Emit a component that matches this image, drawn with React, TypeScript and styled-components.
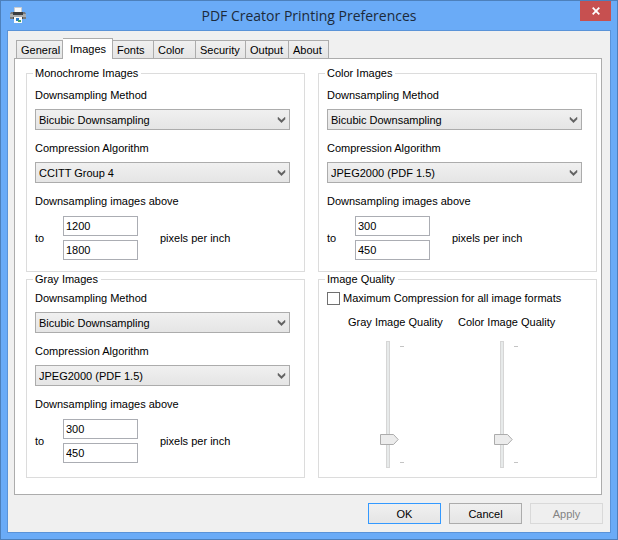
import React, { useId } from "react";
import styled, { createGlobalStyle, css } from "styled-components";

const Global = createGlobalStyle`
  * { box-sizing: border-box; }
  body { margin: 0; background: #6aabf7; }
  body, button, input, select {
    font-family: "Liberation Sans", Arial, sans-serif;
    font-size: 11px;
    line-height: 14px;
    color: #000;
  }
`;

const Window = styled.main`
  display: flex;
  flex-direction: column;
  min-height: 100vh;
  border: 1px solid #4d80bb;
  background: #6aabf7;
`;

const TitleBar = styled.header`
  display: grid;
  grid-template-columns: 1fr auto 1fr;
  height: 29px;
  padding: 0 6px;
`;

const AppIcon = styled.svg`
  width: 16px;
  height: 16px;
  margin: 6px 0 0 3px;
`;

const Title = styled.h1`
  margin: 0;
  font: 400 14px/29px "Open Sans", sans-serif;
  color: #1c2a3a;
  white-space: nowrap;
`;

const CloseButton = styled.button`
  justify-self: end;
  display: grid;
  place-items: center;
  width: 31px;
  height: 20px;
  padding: 0;
  border: 0;
  background: #c75050;
`;

const Body = styled.div`
  flex: 1;
  display: flex;
  flex-direction: column;
  margin: 0 6px 6px;
  padding: 7px 7px 8px 6px;
  border: 1px solid #5a93d8;
  background: #f0f0f0;
`;

const Tabs = styled.div`
  display: flex;
  align-items: flex-end;
  height: 20px;
  padding-left: 2px;
`;

const Tab = styled.button<{ $width: number }>`
  width: ${(p) => p.$width}px;
  height: 18px;
  padding: 0 0 0 4px;
  border: 1px solid #acacac;
  border-width: 1px 1px 0 1px;
  background: linear-gradient(#f0f0f0, #e5e5e5);
  text-align: left;
  white-space: nowrap;

  & + & { border-left-width: 0; }

  &[aria-selected="true"] {
    z-index: 1;
    height: 21px;
    margin-bottom: -1px;
    padding: 0 0 1px 7px;
    background: #fff;
  }
`;

const Panel = styled.section`
  flex: 1;
  display: grid;
  grid-template-columns: 1fr 1fr;
  grid-template-rows: 1fr 1fr;
  gap: 1px 13px;
  margin-right: 1px;
  padding: 8px 4px 16px 11px;
  border: 1px solid #acacac;
  background: #fff;
`;

const Group = styled.fieldset<{ $tight?: boolean }>`
  min-width: 0;
  margin: 0;
  padding: ${(p) => (p.$tight ? 5 : 8)}px 14px 8px 8px;
  border: 1px solid #dcdcdc;
`;

const Legend = styled.legend`
  margin-left: -2px;
  padding: 0 3px 0 2px;
  line-height: 13px;
`;

const Field = styled.div`
  display: flex;
  flex-direction: column;
  gap: 7px;

  & + & { margin-top: 11px; }
`;

const SelectFrame = styled.div`
  display: grid;
  align-items: center;
  > * { grid-area: 1 / 1; }
`;

const Select = styled.select`
  appearance: none;
  width: 100%;
  height: 21px;
  padding: 0 20px 0 3px;
  border: 1px solid #acacac;
  border-radius: 0;
  background: linear-gradient(#f0f0f0, #e5e5e5);
`;

const Chevron = styled.svg`
  justify-self: end;
  margin-right: 4px;
  pointer-events: none;
`;

const Resolution = styled.div`
  display: grid;
  grid-template-columns: 28px 75px 1fr;
  align-items: center;
  padding-top: 1px;
`;

const Inputs = styled.div`
  display: grid;
  gap: 4px;
`;

const NumberBox = styled.input`
  width: 100%;
  height: 20px;
  padding: 0 2px;
  border: 1px solid #abadb3;
  background: #fff;
`;

const Unit = styled.span`
  padding-left: 22px;
`;

const CheckLabel = styled.label`
  display: flex;
  align-items: center;
  gap: 3px;
`;

const Check = styled.input`
  appearance: none;
  width: 13px;
  height: 13px;
  margin: 0;
  border: 1px solid #707070;
  background: #fff;

  &:checked { background: #707070; box-shadow: inset 0 0 0 2px #fff; }
`;

const Sliders = styled.div`
  display: grid;
  grid-template-columns: 110px 1fr;
  padding: 10px 0 0 21px;
  white-space: nowrap;
`;

const SliderField = styled.div`
  display: flex;
  flex-direction: column;
  gap: 12px;
`;

const SliderRow = styled.div<{ $indent: number }>`
  display: flex;
  gap: 1px;
  padding-left: ${(p) => p.$indent}px;
`;

const thumb = encodeURIComponent(
  '<svg xmlns="http://www.w3.org/2000/svg" width="19" height="11"><path d="M.5.5H13.5L18.2 5.5 13.5 10.5H.5Z" fill="#ececec" stroke="#acacac"/></svg>'
);

const thumbStyle = css`
  width: 19px;
  height: 11px;
  border: 0;
  border-radius: 0;
  background: url("data:image/svg+xml,${thumb}") no-repeat;
`;

const Slider = styled.input`
  appearance: none;
  writing-mode: vertical-lr;
  direction: rtl;
  width: 19px;
  height: 127px;
  margin: 0;
  background:
    linear-gradient(#e7eaea, #e7eaea) 7px 1px / 2px 125px no-repeat,
    linear-gradient(#d6d6d6, #d6d6d6) 6px 0 / 4px 127px no-repeat;

  &::-webkit-slider-thumb { appearance: none; ${thumbStyle} }
`;

const Ticks = styled.div`
  width: 4px;
  margin: 5px 0;
  border: 1px solid #c4c4c4;
  border-width: 1px 0;
`;

const Actions = styled.footer`
  display: flex;
  justify-content: flex-end;
  gap: 8px;
  padding-top: 8px;
`;

const Button = styled.button`
  width: 73px;
  height: 21px;
  padding: 0;
  border: 1px solid #acacac;
  background: linear-gradient(#f0f0f0, #e5e5e5);

  &[type="submit"] { border-color: #3399ff; }
  &:disabled {
    border-color: #d9d9d9;
    background: #efefef;
    color: #838383;
  }
`;

function SelectField({ label, value }: { label: string; value: string }) {
  const id = useId();
  return (
    <Field>
      <label htmlFor={id}>{label}</label>
      <SelectFrame>
        <Select id={id} defaultValue={value}>
          <option>{value}</option>
        </Select>
        <Chevron width="9" height="7" viewBox="0 0 9 7">
          <path d="M1 1.200V3.200L4.500 6.700 8 3.200V1.200L4.500 4.200Z" fill="#606060" stroke="#606060" strokeWidth=".5" />
        </Chevron>
      </SelectFrame>
    </Field>
  );
}

interface ImageGroupProps {
  title: string;
  algorithm: string;
  above: number;
  to: number;
  tight?: boolean;
}

function ImageGroup({ title, algorithm, above, to, tight }: ImageGroupProps) {
  const id = useId();
  return (
    <Group $tight={tight}>
      <Legend>{title}</Legend>
      <SelectField label="Downsampling Method" value="Bicubic Downsampling" />
      <SelectField label="Compression Algorithm" value={algorithm} />
      <Field>
        <label htmlFor={id + "above"}>Downsampling images above</label>
        <Resolution>
          <label htmlFor={id + "to"}>to</label>
          <Inputs>
            <NumberBox id={id + "above"} defaultValue={above} />
            <NumberBox id={id + "to"} defaultValue={to} />
          </Inputs>
          <Unit>pixels per inch</Unit>
        </Resolution>
      </Field>
    </Group>
  );
}

function QualitySlider({ label, indent }: { label: string; indent: number }) {
  const id = useId();
  return (
    <SliderField>
      <label htmlFor={id}>{label}</label>
      <SliderRow $indent={indent}>
        <Slider id={id} type="range" min={0} max={100} defaultValue={20} />
        <Ticks />
      </SliderRow>
    </SliderField>
  );
}

const tabs = [
  { name: "General", width: 47 },
  { name: "Images", width: 50 },
  { name: "Fonts", width: 41 },
  { name: "Color", width: 42 },
  { name: "Security", width: 50 },
  { name: "Output", width: 43 },
  { name: "About", width: 40 },
];

export default function App() {
  return (
    <>
      <Global />
      <Window>
        <TitleBar>
          <AppIcon viewBox="0 0 16 16">
            <path d="M4.500.5h7v5h-7z" fill="#fafafa" stroke="#c9cdd2" />
            <path d="M1 5h14l1 2v5H0V7z" fill="#77797c" />
            <path d="M0 7h16v3H0z" fill="#a9abad" />
            <path d="M3 5h10v3H3z" fill="#3b3d40" />
            <path d="M3 10h10v2H3z" fill="#4a4c4f" />
            <path d="M4 10h8v6H4z" fill="#fafafa" />
            <path d="M6 11h3v3H6z" fill="#2878c8" />
            <path d="M8 13h3v2H8z" fill="#4aa064" />
          </AppIcon>
          <Title>PDF Creator Printing Preferences</Title>
          <CloseButton aria-label="Close">
            <svg width="8" height="8" viewBox="0 0 8 8">
              <path d="M.7.7 7.300 7.300M7.300.7.7 7.300" stroke="#fff" strokeWidth="1.800" />
            </svg>
          </CloseButton>
        </TitleBar>
        <Body>
          <Tabs role="tablist">
            {tabs.map((t) => (
              <Tab key={t.name} role="tab" aria-selected={t.name === "Images"} $width={t.width}>
                {t.name}
              </Tab>
            ))}
          </Tabs>
          <Panel role="tabpanel">
            <ImageGroup title="Monochrome Images" algorithm="CCITT Group 4" above={1200} to={1800} />
            <ImageGroup title="Color Images" algorithm="JPEG2000 (PDF 1.5)" above={300} to={450} />
            <ImageGroup title="Gray Images" algorithm="JPEG2000 (PDF 1.5)" above={300} to={450} tight />
            <Group $tight>
              <Legend>Image Quality</Legend>
              <CheckLabel>
                <Check type="checkbox" />
                Maximum Compression for all image formats
              </CheckLabel>
              <Sliders>
                <QualitySlider label="Gray Image Quality" indent={32} />
                <QualitySlider label="Color Image Quality" indent={36} />
              </Sliders>
            </Group>
          </Panel>
          <Actions>
            <Button type="submit">OK</Button>
            <Button type="button">Cancel</Button>
            <Button type="button" disabled>
              Apply
            </Button>
          </Actions>
        </Body>
      </Window>
    </>
  );
}
